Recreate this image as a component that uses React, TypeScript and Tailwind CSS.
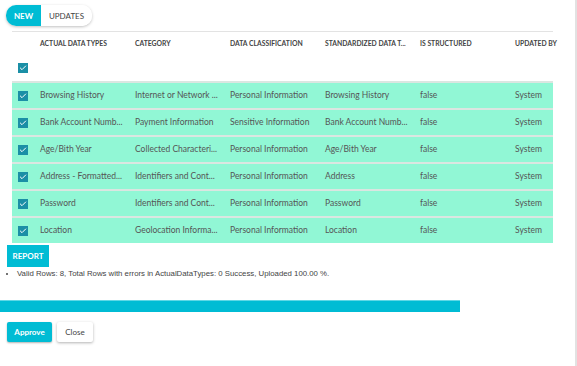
import { Check } from "lucide-react";

const rows = [
  ["Browsing History", "Internet or Network ...", "Personal Information", "Browsing History"],
  ["Bank Account Numb...", "Payment Information", "Sensitive Information", "Bank Account Numb..."],
  ["Age/Bith Year", "Collected Characteri...", "Personal Information", "Age/Bith Year"],
  ["Address - Formatted...", "Identifiers and Cont...", "Personal Information", "Address"],
  ["Password", "Identifiers and Cont...", "Personal Information", "Password"],
  ["Location", "Geolocation Informa...", "Personal Information", "Location"],
];

const headers = ["ACTUAL DATA TYPES", "CATEGORY", "DATA CLASSIFICATION", "STANDARDIZED DATA T...", "IS STRUCTURED"];

function Box() {
  return (
    <div className="w-[10px] h-[10px] bg-[#1b8fa6] flex items-center justify-center">
      <Check size={8} strokeWidth={3} className="text-white" />
    </div>
  );
}

export default function App() {
  return (
    <div className="w-[577px] h-[366px] bg-white relative overflow-hidden border-r-2 border-[#e2e2e2] font-['Lato',sans-serif] text-[#555]">
      {/* tabs */}
      <div className="flex pt-[5px] pl-[6px]">
        <div className="flex h-[21px] rounded-[10px] shadow-[0_1px_3px_rgba(0,0,0,0.25)] overflow-hidden text-[8px] font-bold">
          <div className="w-[35px] bg-[#00bcd4] text-white flex items-center justify-center">NEW</div>
          <div className="w-[51px] bg-white text-[#444] flex items-center justify-center font-normal">UPDATES</div>
        </div>
      </div>

      {/* table */}
      <div className="ml-[12px] w-[541px] mt-[5px] border-t border-[#e3e3e3]">
        <div className="flex h-[22px] items-center text-[6.8px] font-bold text-[#444] whitespace-nowrap">
          <div className="w-[28px] shrink-0" />
          {headers.map((h) => (
            <div key={h} className="w-[95px] shrink-0">{h}</div>
          ))}
          <div className="flex-1">UPDATED BY</div>
        </div>
        <div className="h-[27px] flex items-center pl-[6px]">
          <Box />
        </div>
        {rows.map((r, i) => (
          <div key={i} className="flex h-[27px] items-center border-t-2 border-[#dbe6e1] bg-[#91f7d5] text-[8.5px] text-[#555] whitespace-nowrap">
            <div className="w-[28px] shrink-0 pl-[6px]">
              <Box />
            </div>
            {r.map((c, j) => (
              <div key={j} className="w-[95px] shrink-0">{c}</div>
            ))}
            <div className="w-[95px] shrink-0">false</div>
            <div className="flex-1">System</div>
          </div>
        ))}
      </div>

      {/* report */}
      <div className="ml-[7px] mt-[2px] w-[42px] h-[22px] bg-[#00bcd4] text-white text-[8px] font-bold flex items-center justify-center">
        REPORT
      </div>
      <ul className="list-disc pl-[17px] mt-[2px] font-['Liberation_Sans',sans-serif] text-[7.8px] leading-[10px] text-[#444]">
        <li>Valid Rows: 8, Total Rows with errors in ActualDataTypes: 0 Success, Uploaded 100.00 %.</li>
      </ul>

      <div className="mt-[21px] w-[460px] h-[12px] bg-[#00bcd4] border-t border-[#5fd8e6]" />

      <div className="flex gap-[5px] ml-[7px] mt-[10px]">
        <div className="w-[45px] h-[20px] rounded-[2px] bg-[#00bcd4] text-white text-[8px] font-bold flex items-center justify-center shadow-[0_1px_2px_rgba(0,0,0,0.3)]">
          Approve
        </div>
        <div className="w-[36px] h-[20px] rounded-[2px] bg-white text-[#444] text-[8px] flex items-center justify-center shadow-[0_1px_3px_rgba(0,0,0,0.3)]">
          Close
        </div>
      </div>
    </div>
  );
}
